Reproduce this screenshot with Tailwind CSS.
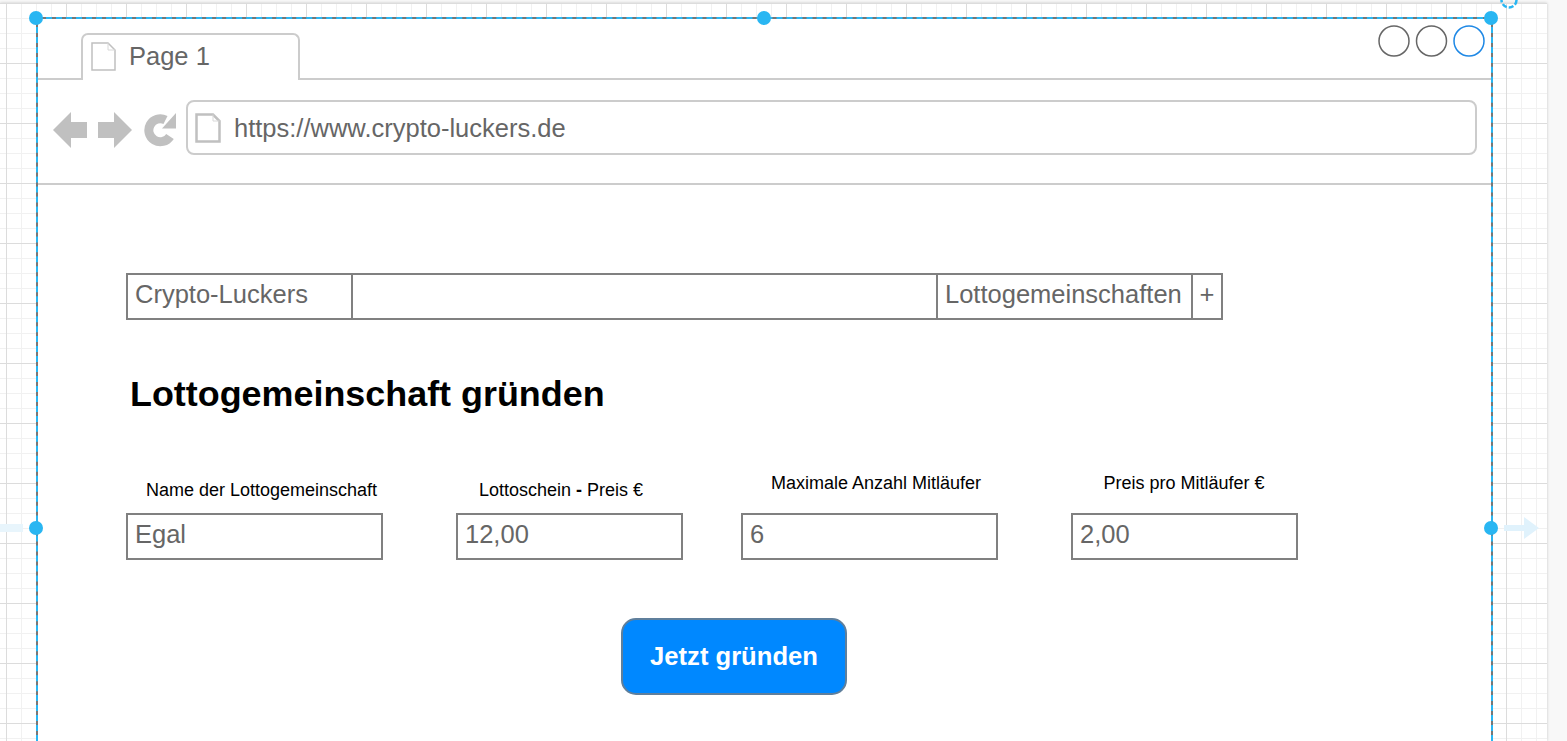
<!DOCTYPE html>
<html lang="de">
<head>
  <meta charset="UTF-8" />
  <title>Crypto-Luckers Mockup</title>
  <script src="https://cdn.jsdelivr.net/npm/@tailwindcss/browser@4"></script>
</head>
<body class="bg-[#f8f8f8] overflow-hidden font-['Liberation_Sans',Arial,sans-serif]">
  <div class="relative w-[1567px] h-[741px] overflow-hidden">
    <!-- canvas with grid -->
    <div class="absolute left-0 top-[3px] w-[1547px] h-[738px] bg-white shadow-[0_0_3px_rgba(0,0,0,0.2)] bg-[linear-gradient(#dcdcdc_1px,transparent_1px),linear-gradient(90deg,#dcdcdc_1px,transparent_1px),linear-gradient(#f1f1f1_1px,transparent_1px),linear-gradient(90deg,#f1f1f1_1px,transparent_1px)] bg-[size:60px_60px,60px_60px,15px_15px,15px_15px] bg-[position:0_0,6px_0,0_0,6px_0]"></div>

    <!-- browser window -->
    <div class="absolute left-[36px] top-[17px] w-[1457px] h-[724px] bg-white border-x-2 border-t-2 border-[#777] flex flex-col">
      <div class="h-[61px] shrink-0 border-b-2 border-[#cccccc] relative">
        <div class="absolute left-[43px] top-[14px] w-[219px] h-[47px] bg-white border-2 border-b-0 border-[#cccccc] rounded-t-[7px] flex items-center pl-[8px] pb-[2px] gap-[13px]">
          <svg width="25" height="29" viewBox="0 0 25 29" fill="none" stroke="#c0c0c0" stroke-width="1.5"><path d="M1 1H17L24 8V28H1Z"/><path d="M17 1V8H24" stroke-width="1" stroke="#d8d8d8"/></svg>
          <span class="text-[25.5px] leading-none text-[#666]">Page 1</span>
        </div>
        <svg class="absolute right-[6px] top-[6px]" width="107" height="32" viewBox="0 0 107 32" fill="none" stroke-width="1.5">
          <circle cx="16" cy="16" r="15" stroke="#666"/>
          <circle cx="53.5" cy="16" r="15" stroke="#666"/>
          <circle cx="91" cy="16" r="15" stroke="#1e88e5"/>
        </svg>
      </div>

      <div class="h-[105px] shrink-0 border-b-2 border-[#cccccc] flex items-start pl-[15px] pr-[14px]">
        <svg class="mt-[32px]" width="34" height="36" viewBox="0 0 34 36" fill="#c0c0c0"><path d="M0 18L18 0V10H34V26H18V36Z"/></svg>
        <svg class="ml-[11px] mt-[32px]" width="34" height="36" viewBox="0 0 34 36" fill="#c0c0c0"><path d="M34 18L16 0V10H0V26H16V36Z"/></svg>
        <svg class="ml-[12px] mt-[33px]" width="33" height="34" viewBox="0 0 33 34" fill="none"><path d="M26 23.5A11.5 11.5 0 1 1 21.5 7" stroke="#c0c0c0" stroke-width="9"/><path d="M32 0V15.5H18Z" fill="#c0c0c0"/></svg>
        <div class="ml-[9px] mt-[20px] flex-1 h-[55px] border-2 border-[#cccccc] rounded-[8px] flex items-center pl-[7px] gap-[13px]">
          <svg width="26" height="30" viewBox="0 0 26 30" fill="none" stroke="#c0c0c0" stroke-width="2.5"><path d="M1.5 1.5H18L24.5 8V28.5H1.5Z"/><path d="M18 1.5V8H24.5" stroke-width="1" stroke="#d8d8d8"/></svg>
          <span class="mt-[2px] text-[25.5px] leading-none text-[#666]">https://www.crypto-luckers.de</span>
        </div>
      </div>

      <div class="pl-[88px] pt-[88px] flex flex-col items-start">
        <!-- nav bar -->
        <div class="flex h-[47px] border-2 border-[#808080] text-[25.5px] leading-none text-[#666]">
          <div class="w-[225px] pl-[7px] pt-[7px] border-r-2 border-[#808080]">Crypto-Luckers</div>
          <div class="w-[585px] border-r-2 border-[#808080]"></div>
          <div class="w-[255px] pl-[7px] pt-[7px] border-r-2 border-[#808080]">Lottogemeinschaften</div>
          <div class="w-[28px] text-center pt-[7px]">+</div>
        </div>

        <h1 class="mt-[55px] ml-[4px] text-[35.9px] leading-[38px] font-bold text-black">Lottogemeinschaft gründen</h1>

        <!-- form fields -->
        <div class="mt-[60px] flex items-end text-[18px] text-black">
          <div class="w-[257px] flex flex-col">
            <label class="text-center leading-[21px] mb-[12px] pl-[14px]">Name der Lottogemeinschaft</label>
            <div class="h-[47px] border-2 border-[#808080] pl-[7px] text-[25.5px] text-[#666] leading-[38px]">Egal</div>
          </div>
          <div class="ml-[73px] w-[227px] flex flex-col">
            <label class="text-center leading-[21px] mb-[12px] pr-[17px]">Lottoschein <b>-</b> Preis €</label>
            <div class="h-[47px] border-2 border-[#808080] pl-[7px] text-[25.5px] text-[#666] leading-[38px]">12,00</div>
          </div>
          <div class="ml-[58px] w-[257px] flex flex-col">
            <label class="text-center leading-[21px] mb-[19px] pl-[13px]">Maximale Anzahl Mitläufer</label>
            <div class="h-[47px] border-2 border-[#808080] pl-[7px] text-[25.5px] text-[#666] leading-[38px]">6</div>
          </div>
          <div class="ml-[73px] w-[227px] flex flex-col">
            <label class="text-center leading-[21px] mb-[19px] pr-[1px]">Preis pro Mitläufer €</label>
            <div class="h-[47px] border-2 border-[#808080] pl-[7px] text-[25.5px] text-[#666] leading-[38px]">2,00</div>
          </div>
        </div>

        <button class="ml-[495px] mt-[58px] w-[226px] h-[77px] shrink-0 rounded-[15px] bg-[#0088ff] border-2 border-[#5f7f9c] text-white font-bold text-[25.6px]">Jetzt gründen</button>
      </div>
    </div>

    <!-- selection overlay -->
    <div class="absolute left-[36px] top-[17px] w-[1457px] h-[724px] border-x-2 border-t-2 border-dashed border-[#29b6f2]"></div>
    <div class="absolute left-[29px] top-[11px] w-[14px] h-[14px] rounded-full bg-[#29b6f2]"></div>
    <div class="absolute left-[756.5px] top-[11px] w-[14px] h-[14px] rounded-full bg-[#29b6f2]"></div>
    <div class="absolute left-[1484px] top-[11px] w-[14px] h-[14px] rounded-full bg-[#29b6f2]"></div>
    <div class="absolute left-[29px] top-[521px] w-[14px] h-[14px] rounded-full bg-[#29b6f2]"></div>
    <div class="absolute left-[1484px] top-[521px] w-[14px] h-[14px] rounded-full bg-[#29b6f2]"></div>
    <svg class="absolute left-[1500px] top-0" width="18" height="9" viewBox="0 0 18 9" fill="none"><circle cx="9" cy="0" r="7.5" stroke="#29b6f2" stroke-width="2.5" stroke-dasharray="5 2"/></svg>
    <svg class="absolute left-[1504px] top-[517px]" width="36" height="22" viewBox="0 0 36 22" fill="#e0f2fc"><path d="M0 8H20V0L35 11L20 22V14H0Z"/></svg>
    <svg class="absolute left-0 top-[524px]" width="23" height="8" viewBox="0 0 23 8" fill="#e8f5fc"><path d="M0 0H23V8H0Z"/></svg>
  </div>
</body>
</html>
